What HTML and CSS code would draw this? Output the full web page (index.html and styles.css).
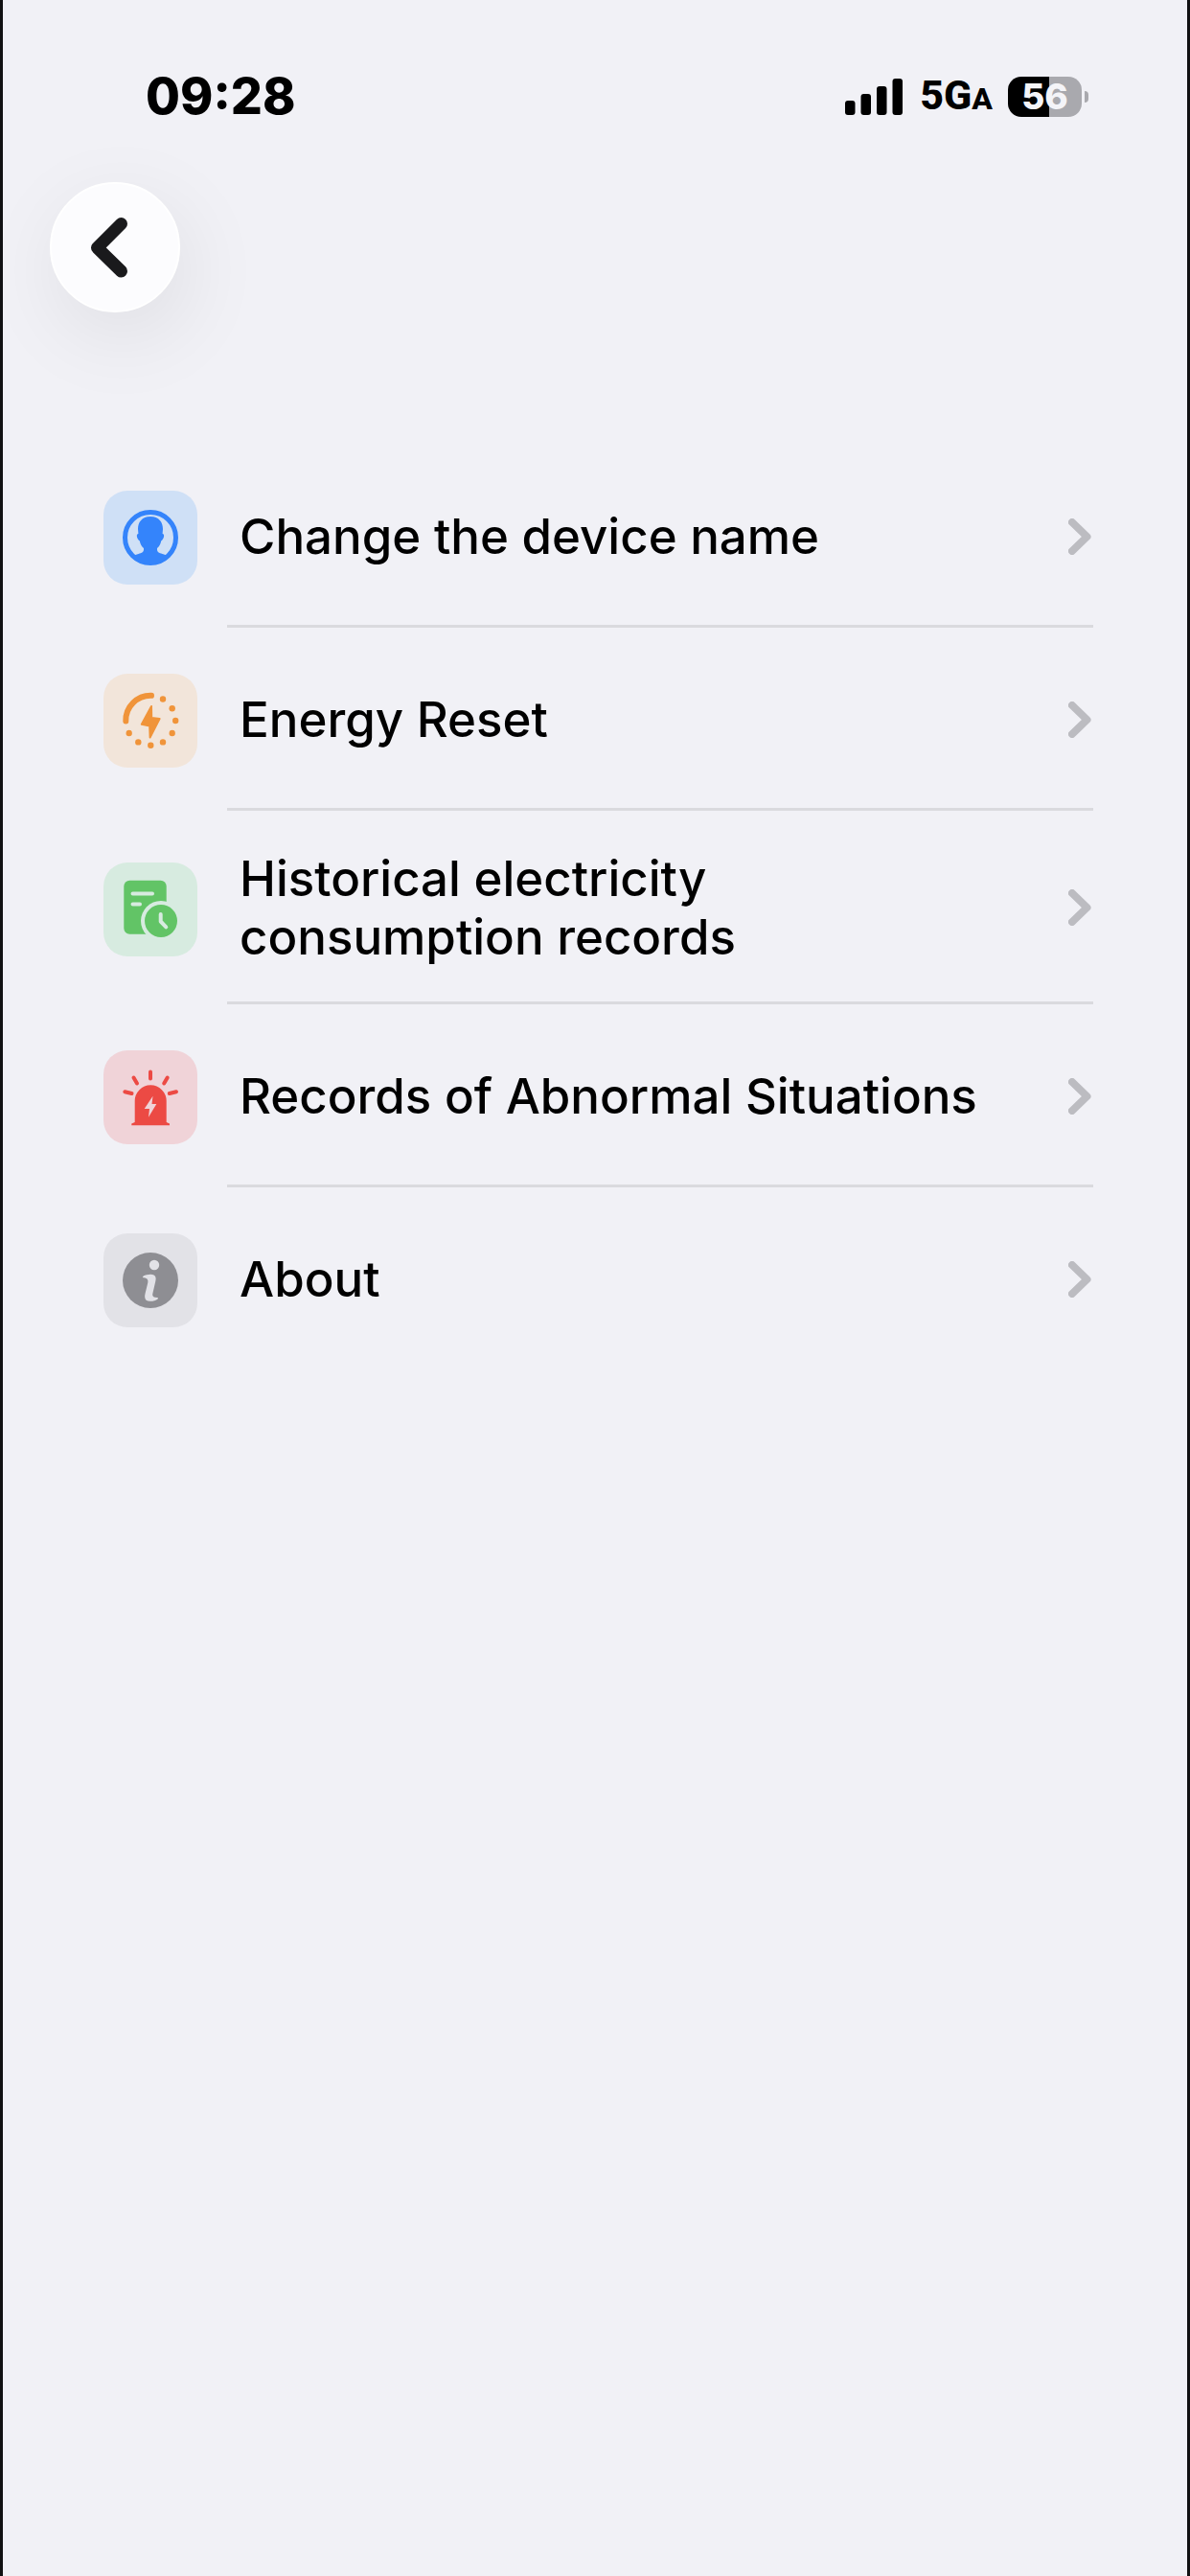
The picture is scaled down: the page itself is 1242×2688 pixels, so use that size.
FILE: index.html
```html
<!DOCTYPE html>
<html lang="en">
<head>
    <meta charset="UTF-8">
    <meta name="viewport" content="width=device-width, initial-scale=1.0">
    <title>Settings</title>
    <link rel="stylesheet" href="styles.css">
</head>
<body>
    <div class="status-bar">
        <div class="time">09:28</div>
        <div class="status-icons">
            <svg class="signal" viewBox="0 0 60 38">
                <rect x="0" y="23" width="10.5" height="15" rx="3"/>
                <rect x="16.5" y="16" width="10.5" height="22" rx="3"/>
                <rect x="33" y="8" width="10.5" height="30" rx="3"/>
                <rect x="49.5" y="0" width="10.5" height="38" rx="3"/>
            </svg>
            <div class="network">5G<span class="network-small">A</span></div>
            <div class="battery">
                <div class="battery-body">56</div>
                <div class="battery-cap"></div>
            </div>
        </div>
    </div>

    <header class="nav">
        <button class="back-button" type="button" aria-label="Back">
            <svg viewBox="0 0 136 136">
                <path d="M74.5 43.5 L49.5 68.5 L74.5 93"/>
            </svg>
        </button>
    </header>

    <main>
        <ul class="menu">
            <li>
                <a class="menu-item" href="#">
                    <svg class="icon icon-blue" viewBox="0 0 98 98">
                        <circle cx="49" cy="49" r="26.5" fill="none" stroke="currentColor" stroke-width="5"/>
                        <path fill="currentColor" d="M49 27 C40 27 36 33 36 40 L36.4 45 C34 45 34.4 50 37.8 52.5 C38.5 56 40 58.5 42 60 C42.5 64 40 65 36.5 66 C33 67 31 67.5 29.5 69 A28 28 0 0 0 68.5 69 C67 67.5 65 67 61.5 66 C58 65 55.5 64 56 60 C58 58.5 59.5 56 60.2 52.5 C63.6 50 64 45 61.6 45 L62 40 C62 33 58 27 49 27 Z"/>
                    </svg>
                    <span class="menu-body">
                        <span class="label">Change the device name</span>
                        <svg class="chevron" viewBox="0 0 24 38"><path d="M4 4 L19.5 19 L4 34"/></svg>
                    </span>
                </a>
            </li>
            <li>
                <a class="menu-item" href="#">
                    <svg class="icon icon-orange" viewBox="0 0 98 98">
                        <path fill="none" stroke="currentColor" stroke-width="6" stroke-linecap="round" d="M23.3 49.5 A26 26 0 0 1 50 22.8"/>
                        <g fill="currentColor">
                            <circle cx="62" cy="26.5" r="3.2"/>
                            <circle cx="71.7" cy="36.2" r="3.2"/>
                            <circle cx="75.2" cy="49" r="3.2"/>
                            <circle cx="71.7" cy="62" r="3.2"/>
                            <circle cx="62" cy="71.4" r="3.2"/>
                            <circle cx="49.3" cy="74.8" r="3.2"/>
                            <circle cx="36.3" cy="71.4" r="3.2"/>
                            <circle cx="26.7" cy="62" r="3.2"/>
                        </g>
                        <path fill="currentColor" stroke="currentColor" stroke-width="2" stroke-linejoin="round" d="M50 34 L50.2 46 L58.6 47 L48.6 66.5 L48.2 54.4 L39.8 52.8 Z"/>
                    </svg>
                    <span class="menu-body">
                        <span class="label">Energy Reset</span>
                        <svg class="chevron" viewBox="0 0 24 38"><path d="M4 4 L19.5 19 L4 34"/></svg>
                    </span>
                </a>
            </li>
            <li>
                <a class="menu-item" href="#">
                    <svg class="icon icon-green" viewBox="0 0 98 98">
                        <rect x="21.3" y="18.7" width="44.4" height="56" rx="6" fill="currentColor"/>
                        <path class="cutout-line" d="M30.5 32.5 H51 M30.5 43.5 H38"/>
                        <circle class="cutout" cx="60" cy="61" r="21"/>
                        <circle cx="60" cy="61" r="17" fill="currentColor"/>
                        <path class="cutout-line" d="M59.7 54 V61.5 L65.3 67.3"/>
                    </svg>
                    <span class="menu-body">
                        <span class="label">Historical electricity consumption records</span>
                        <svg class="chevron" viewBox="0 0 24 38"><path d="M4 4 L19.5 19 L4 34"/></svg>
                    </span>
                </a>
            </li>
            <li>
                <a class="menu-item" href="#">
                    <svg class="icon icon-red" viewBox="0 0 98 98">
                        <path fill="currentColor" d="M32.7 75 V52.8 A16.5 16.5 0 0 1 65.7 52.8 V75 L69 76.5 V78.3 H29.3 V76.5 Z"/>
                        <path fill="none" stroke="currentColor" stroke-width="4" stroke-linecap="round" d="M49 22.5 V29.5 M31.5 28.5 L35 34.5 M66.7 28.5 L63.2 34.5 M22.3 43.2 L29.5 45 M76 43.2 L68.8 45"/>
                        <path class="cutout" d="M51.5 47.7 L50.5 56 H55.3 L47 69.7 L48 61 H42.7 Z"/>
                    </svg>
                    <span class="menu-body">
                        <span class="label">Records of Abnormal Situations</span>
                        <svg class="chevron" viewBox="0 0 24 38"><path d="M4 4 L19.5 19 L4 34"/></svg>
                    </span>
                </a>
            </li>
            <li>
                <a class="menu-item" href="#">
                    <svg class="icon icon-gray" viewBox="0 0 98 98">
                        <circle cx="49" cy="49" r="29" fill="currentColor"/>
                        <circle class="cutout" cx="53" cy="33" r="5.2"/>
                        <path class="cutout" d="M40.8 46 Q41 44 45 43.2 Q50 42.2 52.6 43.4 Q55.5 45 54.3 50 L51.2 63.5 Q50.8 67.2 56.8 67 Q57.5 68.8 54 70 Q47.5 71.8 44.6 69.8 Q42.3 67.5 43.6 62.5 L46.3 51.5 Q47.5 46.2 40.8 46 Z"/>
                    </svg>
                    <span class="menu-body">
                        <span class="label">About</span>
                        <svg class="chevron" viewBox="0 0 24 38"><path d="M4 4 L19.5 19 L4 34"/></svg>
                    </span>
                </a>
            </li>
        </ul>
    </main>
</body>
</html>
```
FILE: styles.css
```css
* {
    box-sizing: border-box;
}

body {
    margin: 0;
    min-height: 100vh;
    background: #f1f1f6;
    border-left: 3px solid #111113;
    border-right: 3px solid #111113;
    color: #000;
    font-family: Inter, "Liberation Sans", sans-serif;
}

/* Status bar */
.status-bar {
    display: flex;
    justify-content: space-between;
    align-items: center;
    height: 133px;
    padding: 69px 103px 0 149px;
}

.time {
    font-size: 52px;
    font-weight: 800;
    line-height: 64px;
}

.status-icons {
    display: flex;
    align-items: center;
}

.signal {
    width: 60px;
    height: 38px;
    margin-right: 18px;
}

.network {
    margin-right: 16px;
    font-family: Roboto, sans-serif;
    font-size: 43px;
    font-weight: 800;
    line-height: 64px;
}

.network-small {
    font-size: 32px;
}

.battery {
    display: flex;
    align-items: center;
    gap: 3px;
}

.battery-body {
    width: 77px;
    height: 42px;
    border-radius: 14px;
    background: linear-gradient(to right, #000 56%, #a9a9ae 56%);
    color: #f4f4f8;
    font-size: 37px;
    font-weight: 800;
    line-height: 42px;
    text-align: center;
}

.battery-cap {
    width: 4px;
    height: 12px;
    border-radius: 0 6px 6px 0;
    background: #a9a9ae;
}

/* Back button */
.nav {
    padding: 57px 49px 138px;
}

.back-button {
    display: block;
    width: 136px;
    height: 136px;
    padding: 0;
    border: 2px solid #fff;
    border-radius: 50%;
    background: #fcfcfe;
    box-shadow: 8px 24px 88px rgba(0, 0, 0, 0.08);
    cursor: pointer;
}

.back-button svg {
    display: block;
    margin: -2px;
    width: 136px;
    height: 136px;
}

.back-button path {
    fill: none;
    stroke: #1a1a1c;
    stroke-width: 13;
    stroke-linecap: round;
    stroke-linejoin: round;
}

/* Menu list */
.menu {
    margin: 0;
    padding: 0 98px 0 105px;
    list-style: none;
}

.menu-item {
    display: flex;
    align-items: center;
    gap: 31px;
    padding-top: 3px;
    color: inherit;
    text-decoration: none;
}

.menu-body {
    flex: 1;
    display: flex;
    align-items: center;
    justify-content: space-between;
    gap: 60px;
    min-height: 188px;
    padding: 37px 2px 37px 13px;
    border-bottom: 3px solid #dadade;
}

.menu li:last-child .menu-body {
    border-bottom-color: transparent;
}

.label {
    font-size: 51px;
    font-weight: 500;
    line-height: 61px;
}

.chevron {
    flex: none;
    width: 24px;
    height: 38px;
    fill: none;
    stroke: #bcbcc1;
    stroke-width: 8;
    stroke-linecap: round;
    stroke-linejoin: round;
}

.icon {
    flex: none;
    width: 98px;
    height: 98px;
    border-radius: 25px;
    background: var(--tint);
}

.icon-blue {
    --tint: #cfe0f6;
    color: #3484fb;
}

.icon-orange {
    --tint: #f2e5da;
    color: #f0943a;
}

.icon-green {
    --tint: #d7ebe0;
    color: #62c466;
}

.icon-red {
    --tint: #f0d3d8;
    color: #ec4a44;
}

.icon-gray {
    --tint: #e2e2e7;
    color: #8e8e93;
}

.cutout {
    fill: var(--tint);
}

.cutout-line {
    fill: none;
    stroke: var(--tint);
    stroke-width: 4;
    stroke-linecap: round;
    stroke-linejoin: round;
}
```
